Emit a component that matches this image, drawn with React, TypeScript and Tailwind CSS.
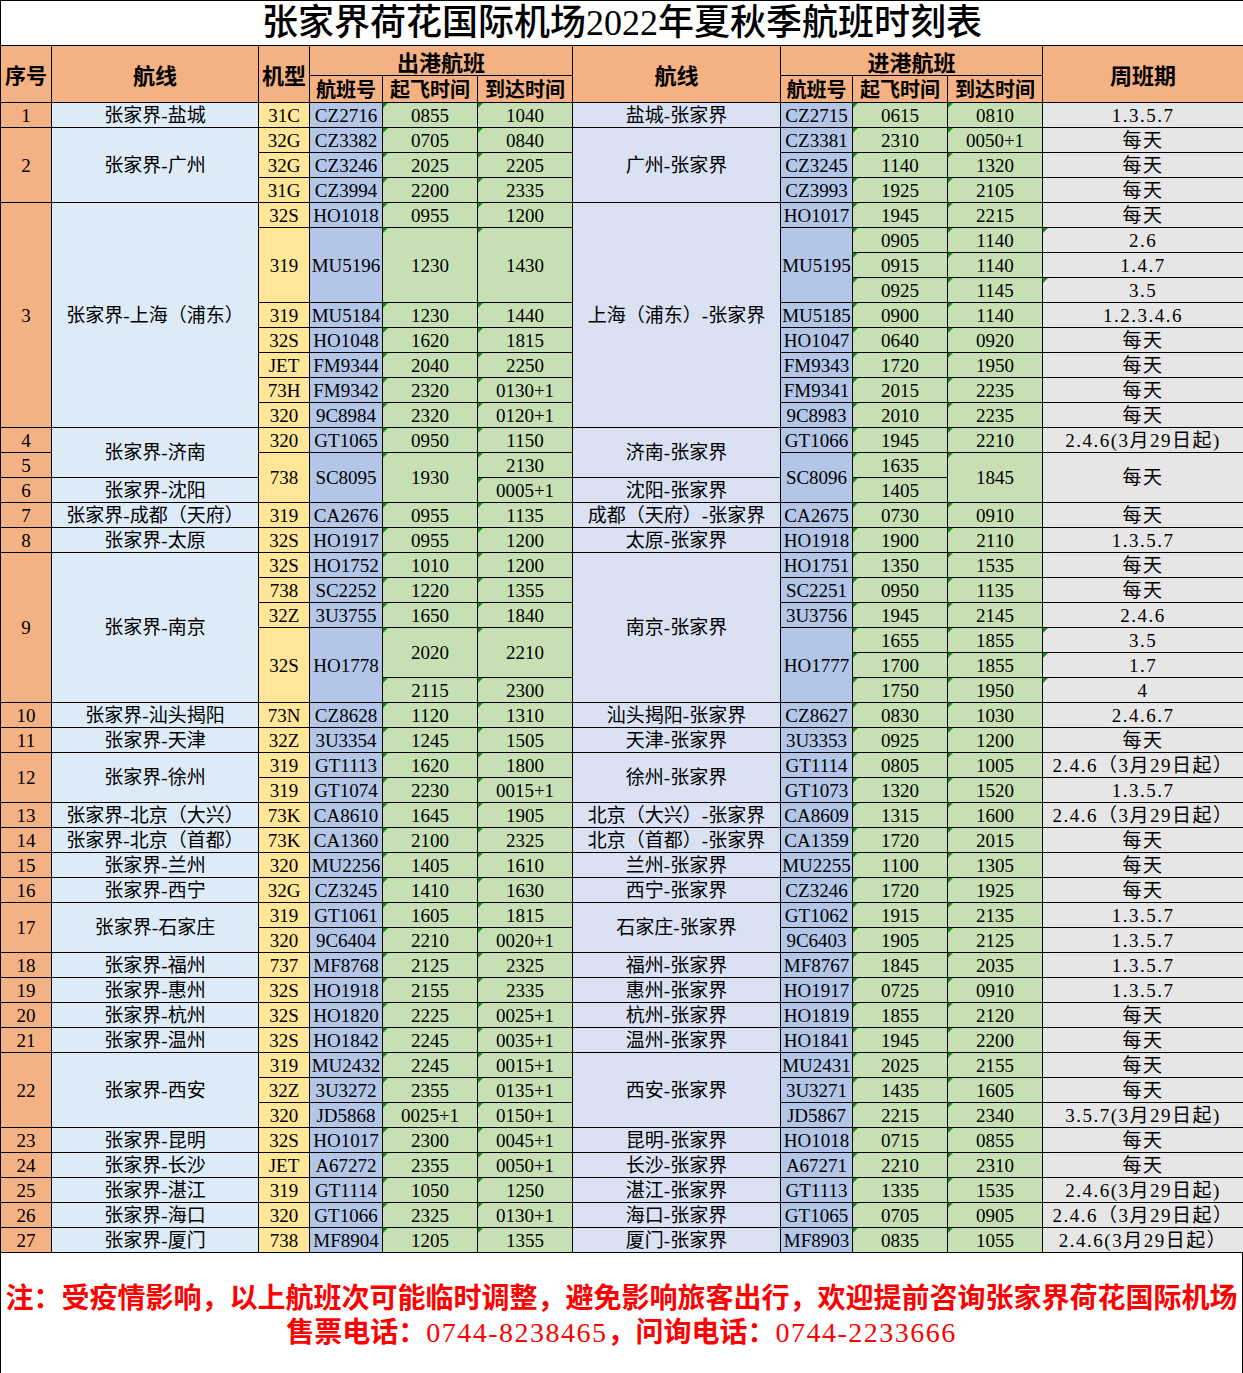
import React from 'react';

type Cell = string | [string, number];

// 46 data rows; spanned cells are written once with their row count
const ROWS: Cell[][] = [
  ['1', '张家界-盐城', '31C', 'CZ2716', '0855', '1040', '盐城-张家界', 'CZ2715', '0615', '0810', '1.3.5.7'],
  [['2', 3], ['张家界-广州', 3], '32G', 'CZ3382', '0705', '0840', ['广州-张家界', 3], 'CZ3381', '2310', '0050+1', '每天'],
  ['32G', 'CZ3246', '2025', '2205', 'CZ3245', '1140', '1320', '每天'],
  ['31G', 'CZ3994', '2200', '2335', 'CZ3993', '1925', '2105', '每天'],
  [['3', 9], ['张家界-上海（浦东）', 9], '32S', 'HO1018', '0955', '1200', ['上海（浦东）-张家界', 9], 'HO1017', '1945', '2215', '每天'],
  [['319', 3], ['MU5196', 3], ['1230', 3], ['1430', 3], ['MU5195', 3], '0905', '1140', '2.6'],
  ['0915', '1140', '1.4.7'],
  ['0925', '1145', '3.5'],
  ['319', 'MU5184', '1230', '1440', 'MU5185', '0900', '1140', '1.2.3.4.6'],
  ['32S', 'HO1048', '1620', '1815', 'HO1047', '0640', '0920', '每天'],
  ['JET', 'FM9344', '2040', '2250', 'FM9343', '1720', '1950', '每天'],
  ['73H', 'FM9342', '2320', '0130+1', 'FM9341', '2015', '2235', '每天'],
  ['320', '9C8984', '2320', '0120+1', '9C8983', '2010', '2235', '每天'],
  ['4', ['张家界-济南', 2], '320', 'GT1065', '0950', '1150', ['济南-张家界', 2], 'GT1066', '1945', '2210', '2.4.6(3月29日起)'],
  ['5', ['738', 2], ['SC8095', 2], ['1930', 2], '2130', ['SC8096', 2], '1635', ['1845', 2], ['每天', 2]],
  ['6', '张家界-沈阳', '0005+1', '沈阳-张家界', '1405'],
  ['7', '张家界-成都（天府）', '319', 'CA2676', '0955', '1135', '成都（天府）-张家界', 'CA2675', '0730', '0910', '每天'],
  ['8', '张家界-太原', '32S', 'HO1917', '0955', '1200', '太原-张家界', 'HO1918', '1900', '2110', '1.3.5.7'],
  [['9', 6], ['张家界-南京', 6], '32S', 'HO1752', '1010', '1200', ['南京-张家界', 6], 'HO1751', '1350', '1535', '每天'],
  ['738', 'SC2252', '1220', '1355', 'SC2251', '0950', '1135', '每天'],
  ['32Z', '3U3755', '1650', '1840', '3U3756', '1945', '2145', '2.4.6'],
  [['32S', 3], ['HO1778', 3], ['2020', 2], ['2210', 2], ['HO1777', 3], '1655', '1855', '3.5'],
  ['1700', '1855', '1.7'],
  ['2115', '2300', '1750', '1950', '4'],
  ['10', '张家界-汕头揭阳', '73N', 'CZ8628', '1120', '1310', '汕头揭阳-张家界', 'CZ8627', '0830', '1030', '2.4.6.7'],
  ['11', '张家界-天津', '32Z', '3U3354', '1245', '1505', '天津-张家界', '3U3353', '0925', '1200', '每天'],
  [['12', 2], ['张家界-徐州', 2], '319', 'GT1113', '1620', '1800', ['徐州-张家界', 2], 'GT1114', '0805', '1005', '2.4.6（3月29日起）'],
  ['319', 'GT1074', '2230', '0015+1', 'GT1073', '1320', '1520', '1.3.5.7'],
  ['13', '张家界-北京（大兴）', '73K', 'CA8610', '1645', '1905', '北京（大兴）-张家界', 'CA8609', '1315', '1600', '2.4.6（3月29日起）'],
  ['14', '张家界-北京（首都）', '73K', 'CA1360', '2100', '2325', '北京（首都）-张家界', 'CA1359', '1720', '2015', '每天'],
  ['15', '张家界-兰州', '320', 'MU2256', '1405', '1610', '兰州-张家界', 'MU2255', '1100', '1305', '每天'],
  ['16', '张家界-西宁', '32G', 'CZ3245', '1410', '1630', '西宁-张家界', 'CZ3246', '1720', '1925', '每天'],
  [['17', 2], ['张家界-石家庄', 2], '319', 'GT1061', '1605', '1815', ['石家庄-张家界', 2], 'GT1062', '1915', '2135', '1.3.5.7'],
  ['320', '9C6404', '2210', '0020+1', '9C6403', '1905', '2125', '1.3.5.7'],
  ['18', '张家界-福州', '737', 'MF8768', '2125', '2325', '福州-张家界', 'MF8767', '1845', '2035', '1.3.5.7'],
  ['19', '张家界-惠州', '32S', 'HO1918', '2155', '2335', '惠州-张家界', 'HO1917', '0725', '0910', '1.3.5.7'],
  ['20', '张家界-杭州', '32S', 'HO1820', '2225', '0025+1', '杭州-张家界', 'HO1819', '1855', '2120', '每天'],
  ['21', '张家界-温州', '32S', 'HO1842', '2245', '0035+1', '温州-张家界', 'HO1841', '1945', '2200', '每天'],
  [['22', 3], ['张家界-西安', 3], '319', 'MU2432', '2245', '0015+1', ['西安-张家界', 3], 'MU2431', '2025', '2155', '每天'],
  ['32Z', '3U3272', '2355', '0135+1', '3U3271', '1435', '1605', '每天'],
  ['320', 'JD5868', '0025+1', '0150+1', 'JD5867', '2215', '2340', '3.5.7(3月29日起)'],
  ['23', '张家界-昆明', '32S', 'HO1017', '2300', '0045+1', '昆明-张家界', 'HO1018', '0715', '0855', '每天'],
  ['24', '张家界-长沙', 'JET', 'A67272', '2355', '0050+1', '长沙-张家界', 'A67271', '2210', '2310', '每天'],
  ['25', '张家界-湛江', '319', 'GT1114', '1050', '1250', '湛江-张家界', 'GT1113', '1335', '1535', '2.4.6(3月29日起)'],
  ['26', '张家界-海口', '320', 'GT1066', '2325', '0130+1', '海口-张家界', 'GT1065', '0705', '0905', '2.4.6（3月29日起）'],
  ['27', '张家界-厦门', '738', 'MF8904', '1205', '1355', '厦门-张家界', 'MF8903', '0835', '1055', '2.4.6(3月29日起）'],
];

const BG = [
  'bg-[#F4B183]',
  'bg-[#DDEBF7]',
  'bg-[#FFE699]',
  'bg-[#B4C6E7]',
  'bg-[#C6E0B4]',
  'bg-[#C6E0B4]',
  'bg-[#D9E1F2]',
  'bg-[#B4C6E7]',
  'bg-[#C6E0B4]',
  'bg-[#C6E0B4]',
  'bg-[#E7E6E6] tracking-[1.5px]',
];

// numbers stored as text get Excel's little green corner
const TEXT_NUMBERS = ['2.6', '3.5', '1.7', '4'];

type Placed = { col: number; text: string; span: number };

const layout = (): Placed[][] => {
  const left = Array(11).fill(0);
  return ROWS.map((row) => {
    const out: Placed[] = [];
    let k = 0;
    for (let c = 0; c < 11; c++) {
      if (left[c] > 0) {
        left[c]--;
        continue;
      }
      const cell = row[k++];
      const [text, span] = typeof cell === 'string' ? [cell, 1] : cell;
      if (span > 1) left[c] = span - 1;
      out.push({ col: c, text, span });
    }
    return out;
  });
};

const PLACED = layout();

const hasFlag = (p: Placed) =>
  [4, 5, 8, 9].includes(p.col) || (p.col === 10 && TEXT_NUMBERS.includes(p.text));

const head = "border border-black bg-[#F4B183] p-0 text-center font-['Noto_Sans_CJK_SC',sans-serif] font-bold leading-none text-black";

export default function App() {
  return (
    <div className="w-[1243px] bg-white">
      <table className="w-[1243px] table-fixed border-collapse">
        <colgroup>
          <col className="w-[51px]" />
          <col className="w-[207px]" />
          <col className="w-[51px]" />
          <col className="w-[73px]" />
          <col className="w-[95px]" />
          <col className="w-[95px]" />
          <col className="w-[208px]" />
          <col className="w-[72px]" />
          <col className="w-[95px]" />
          <col className="w-[95px]" />
          <col className="w-[201px]" />
        </colgroup>
        <thead>
          <tr className="h-[45px]">
            <th
              colSpan={11}
              className="border border-black bg-white p-0 text-center font-['Liberation_Serif','Noto_Sans_CJK_SC',serif] text-[36px] font-medium leading-none text-black"
            >
              张家界荷花国际机场2022年夏秋季航班时刻表
            </th>
          </tr>
          <tr className="h-[30px]">
            <th rowSpan={2} className={`${head} text-[21px]`}>序号</th>
            <th rowSpan={2} className={`${head} text-[22px]`}>航线</th>
            <th rowSpan={2} className={`${head} text-[22px]`}>机型</th>
            <th colSpan={3} className={`${head} text-[22px]`}>出港航班</th>
            <th rowSpan={2} className={`${head} text-[22px]`}>航线</th>
            <th colSpan={3} className={`${head} text-[22px]`}>进港航班</th>
            <th rowSpan={2} className={`${head} text-[22px]`}>周班期</th>
          </tr>
          <tr className="h-[27px]">
            <th className={`${head} text-[20px]`}>航班号</th>
            <th className={`${head} text-[20px]`}>起飞时间</th>
            <th className={`${head} text-[20px]`}>到达时间</th>
            <th className={`${head} text-[20px]`}>航班号</th>
            <th className={`${head} text-[20px]`}>起飞时间</th>
            <th className={`${head} text-[20px]`}>到达时间</th>
          </tr>
        </thead>
        <tbody className="font-['Liberation_Serif','Noto_Sans_CJK_SC',serif] text-[19px] leading-none text-black">
          {PLACED.map((row, r) => (
            <tr key={r} className="h-[25px]">
              {row.map((p) => (
                <td
                  key={p.col}
                  rowSpan={p.span}
                  className={`relative whitespace-nowrap border border-black p-0 text-center ${BG[p.col]}`}
                >
                  {hasFlag(p) && (
                    <span className="absolute left-0 top-0 h-0 w-0 border-r-[5px] border-t-[5px] border-r-transparent border-t-[#159315]" />
                  )}
                  {p.text}
                </td>
              ))}
            </tr>
          ))}
        </tbody>
      </table>
      <div className="flex h-[121px] flex-col items-center border-x border-b border-black pt-[29px] font-['Liberation_Serif','Noto_Sans_CJK_SC',serif] text-[28px] font-bold leading-[34px] text-[#FF0000]">
        <p className="whitespace-nowrap">注：受疫情影响，以上航班次可能临时调整，避免影响旅客出行，欢迎提前咨询张家界荷花国际机场</p>
        <p className="whitespace-nowrap">
          售票电话：<span className="font-normal tracking-[1.5px]">0744-8238465</span>，问询电话：<span className="font-normal tracking-[1.5px]">0744-2233666</span>
        </p>
      </div>
    </div>
  );
}
